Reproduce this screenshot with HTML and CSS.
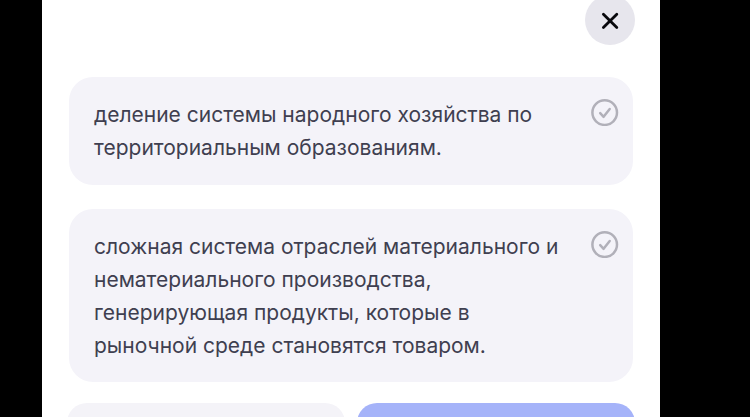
FILE: index.html
```html
<!DOCTYPE html>
<html lang="ru">
<head>
  <meta charset="utf-8">
  <meta name="viewport" content="width=device-width, initial-scale=1">
  <title>Варианты ответа</title>
  <link rel="stylesheet" href="styles.css">
</head>
<body>
  <main class="sheet">
    <header class="sheet-header">
      <button class="close" type="button" aria-label="Закрыть">
        <svg class="close-icon" viewBox="0 0 18 18" aria-hidden="true"><path d="M2.4 3.2 15.8 16.6M15.8 3.2 2.4 16.6"/></svg>
      </button>
    </header>
    <div class="options">
      <label class="option" for="option-1">
        <span class="option-text">деление системы народного хозяйства по территориальным образованиям.</span>
        <span class="check">
          <input class="check-box" type="checkbox" id="option-1">
          <svg class="check-mark" viewBox="0 0 28 28" aria-hidden="true"><circle cx="13.7" cy="14.6" r="12.3"/><path d="M9.2 15.2 12.6 18.8 18.7 11"/></svg>
        </span>
      </label>
      <label class="option" for="option-2">
        <span class="option-text">сложная система отраслей материального и нематериального производства, генерирующая продукты, которые в рыночной среде становятся товаром.</span>
        <span class="check">
          <input class="check-box" type="checkbox" id="option-2">
          <svg class="check-mark" viewBox="0 0 28 28" aria-hidden="true"><circle cx="13.7" cy="14.6" r="12.3"/><path d="M9.2 15.2 12.6 18.8 18.7 11"/></svg>
        </span>
      </label>
    </div>
    <footer class="actions">
      <button class="action" type="button" aria-label="Назад"></button>
      <button class="action action-primary" type="button" aria-label="Далее"></button>
    </footer>
  </main>
</body>
</html>
```
FILE: styles.css
```css
* {
  box-sizing: border-box;
}

body {
  margin: 0;
  height: 100vh;
  padding: 0 90px 0 42px;
  overflow: hidden;
  background: #000;
  color: #3f3f50;
  font: 21px/33px Inter, "Noto Sans", sans-serif;
}

.sheet {
  height: 100%;
  padding: 0 25px;
  overflow: hidden;
  background: #fff;
}

/* The header is partly scrolled out above the top edge. */
.sheet-header {
  display: flex;
  justify-content: flex-end;
  margin-top: -5px;
}

.close {
  display: grid;
  place-items: center;
  width: 50px;
  height: 50px;
  padding: 0;
  border: 0;
  border-radius: 50%;
  background: #e7e6ed;
}

.close-icon {
  width: 18px;
  height: 18px;
  overflow: visible;
  fill: none;
  stroke: #08080c;
  stroke-width: 2.8;
  stroke-linecap: round;
}

.options {
  display: grid;
  gap: 24px;
  margin: 32px 2px 0;
}

.option {
  display: flex;
  gap: 16px;
  align-items: flex-start;
  justify-content: space-between;
  padding: 21px 14px 20px 25px;
  border-radius: 24px;
  background: #f4f3f9;
}

.option:first-child {
  padding-bottom: 21px;
}

.option-text {
  max-width: 472px;
}

.check {
  display: grid;
  flex: none;
  width: 28px;
  height: 28px;
}

.check-box,
.check-mark {
  grid-area: 1 / 1;
  width: 28px;
  height: 28px;
  margin: 0;
}

.check-box {
  appearance: none;
  border-radius: 50%;
}

.check-mark {
  fill: none;
  stroke: #b1b0b9;
  stroke-width: 2.5;
  stroke-linecap: round;
  stroke-linejoin: round;
  pointer-events: none;
}

.actions {
  display: grid;
  grid-template-columns: 1fr 1fr;
  gap: 12px;
  margin-top: 21px;
}

.action {
  height: 60px;
  border: 0;
  border-radius: 20px;
  background: #f4f3f8;
}

.action-primary {
  background: #a5b3f9;
}
```
